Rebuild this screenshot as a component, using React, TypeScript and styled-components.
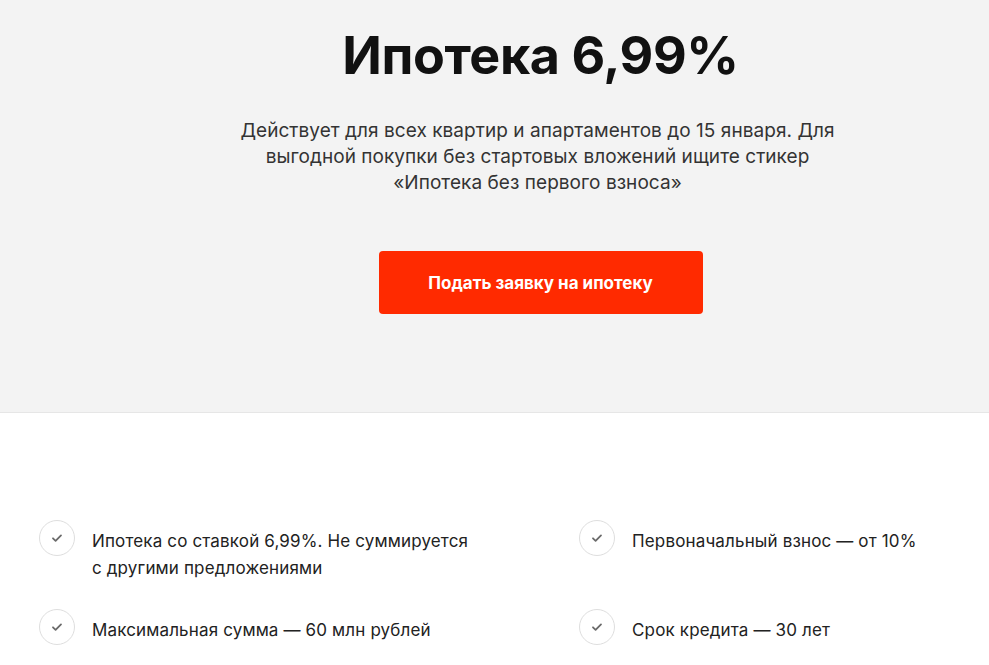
import React from "react";
import styled, { createGlobalStyle } from "styled-components";

const Global = createGlobalStyle`
  html, body { margin: 0; padding: 0; background: #fff; }
  body { font-family: Inter, "Noto Sans", sans-serif; color: #1a1a1a; }
  * { box-sizing: border-box; }
`;

const Hero = styled.section`
  background: #f3f3f3;
  border-bottom: 1px solid #e6e6e6;
  height: 413px;
  padding: 24px 0 0 92px;
  display: flex;
  flex-direction: column;
  align-items: center;
`;

const Title = styled.h1`
  margin: 0;
  font-size: 52px;
  line-height: 64px;
  font-weight: 700;
  letter-spacing: -0.4px;
  color: #111;
`;

const Lead = styled.p`
  margin: 30px 6px 0 0;
  width: 620px;
  text-align: center;
  font-size: 19px;
  line-height: 26px;
  letter-spacing: 0.05px;
  color: #333;
`;

const Button = styled.button`
  margin-top: 55px;
  width: 324px;
  height: 63px;
  border: none;
  border-radius: 4px;
  background: #ff2a00;
  color: #fff;
  font-family: Inter, sans-serif;
  font-size: 17px;
  font-weight: 700;
  cursor: pointer;
`;

const Features = styled.section`
  padding: 107px 0 0 39px;
  display: grid;
  grid-template-columns: 540px 400px;
  row-gap: 27px;
`;

const Item = styled.div`
  display: flex;
  align-items: flex-start;
  gap: 17px;
`;

const Check = styled.span`
  flex: none;
  width: 36px;
  height: 36px;
  border-radius: 50%;
  border: 1px solid #dedede;
  display: flex;
  align-items: center;
  justify-content: center;
  background: #fff;
`;

const Text = styled.span`
  padding-top: 8px;
  font-size: 17px;
  line-height: 27px;
  letter-spacing: 0.15px;
  color: #222;
  max-width: 385px;
`;

const CheckIcon = () => (
  <svg width="12" height="10" viewBox="0 0 12 10" fill="none">
    <path d="M2 5.3 L4.6 7.8 L10 2.4" stroke="#6a6a6a" strokeWidth="1.8" strokeLinecap="round" strokeLinejoin="round" />
  </svg>
);

const items = [
  "Ипотека со ставкой 6,99%. Не суммируется с другими предложениями",
  "Первоначальный взнос — от 10%",
  "Максимальная сумма — 60 млн рублей",
  "Срок кредита — 30 лет",
];

export default function App() {
  return (
    <>
      <Global />
      <Hero>
        <Title>Ипотека 6,99%</Title>
        <Lead>
          Действует для всех квартир и апартаментов до 15 января. Для выгодной покупки без стартовых вложений ищите стикер «Ипотека без первого взноса»
        </Lead>
        <Button>Подать заявку на ипотеку</Button>
      </Hero>
      <Features>
        {items.map((t) => (
          <Item key={t}>
            <Check>
              <CheckIcon />
            </Check>
            <Text>{t}</Text>
          </Item>
        ))}
      </Features>
    </>
  );
}
